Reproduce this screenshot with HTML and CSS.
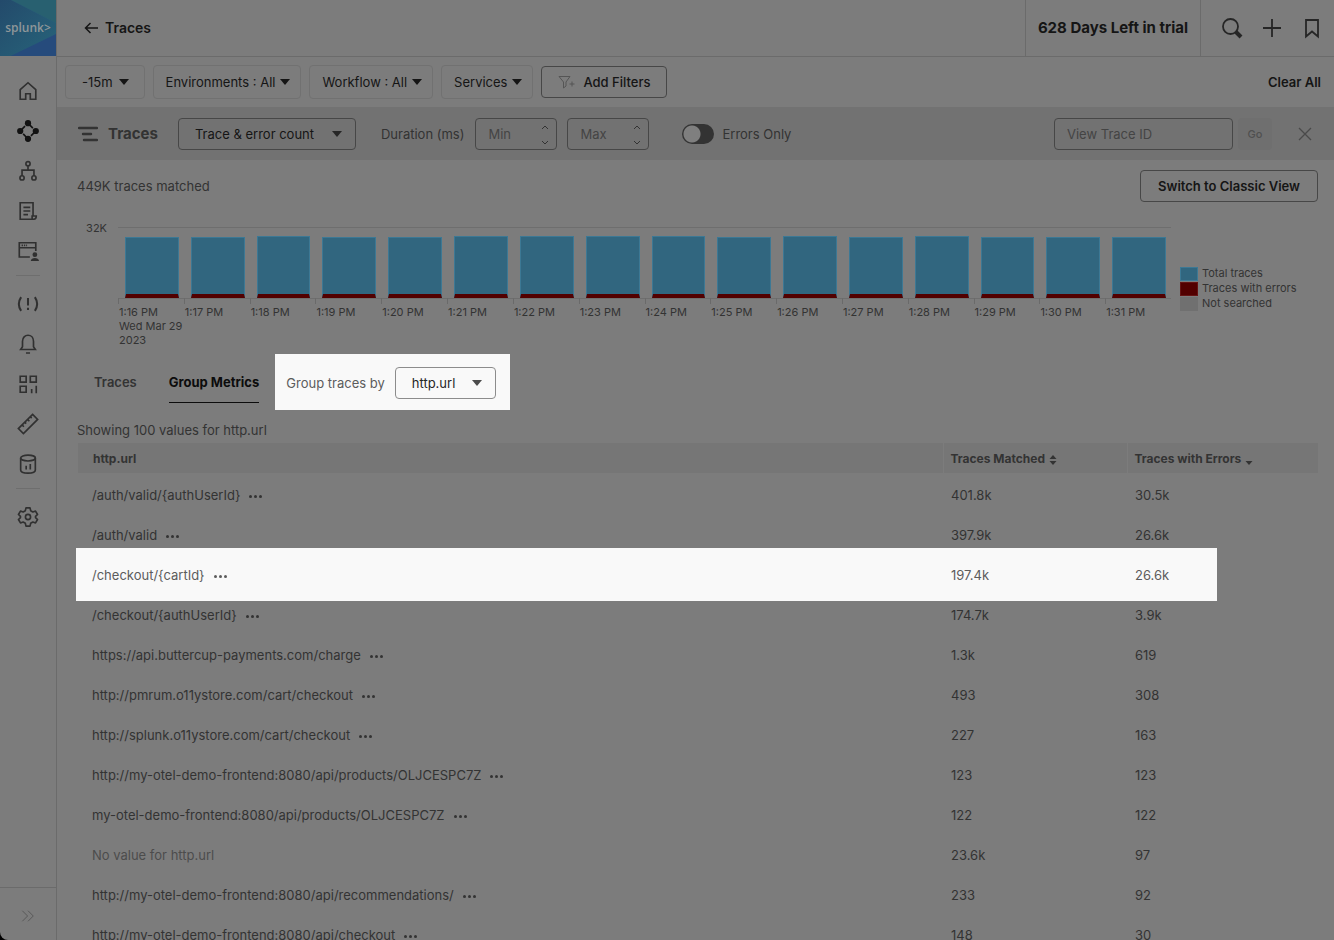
FILE: index.html
```html
<!DOCTYPE html>
<html lang="en">
<head>
<meta charset="utf-8">
<meta name="viewport" content="width=device-width, initial-scale=1">
<title>Traces</title>
<link rel="stylesheet" href="styles.css">
</head>
<body>
<div class="app">
  <aside class="sidebar">
    <a class="logo" href="#" aria-label="splunk home">
      <svg class="logo-art" viewBox="0 0 56 56" preserveAspectRatio="none" aria-hidden="true">
        <defs>
          <linearGradient id="g1" x1="0" y1="0" x2="1" y2="1"><stop offset="0" stop-color="#234a6b"/><stop offset="1" stop-color="#27647a"/></linearGradient>
          <linearGradient id="g2" x1="0" y1="1" x2="1" y2="0"><stop offset="0" stop-color="#244f78"/><stop offset="1" stop-color="#2b6a80"/></linearGradient>
        </defs>
        <rect width="56" height="56" fill="url(#g2)"/>
        <path d="M11 0H56V23Z" fill="#286070"/>
        <path d="M0 0H11L56 23V34L11 56H0Z" fill="url(#g1)"/>
        <path d="M11 56L56 34V56Z" fill="#264b7c"/>
      </svg>
      <span class="logo-text">splunk&gt;</span>
    </a>
    <nav class="nav" aria-label="Main">
      <a href="#" aria-label="Home"><svg viewBox="0 0 24 24"><path d="M3.500 10.500L12 3L20.500 10.500V21H14.500V15H9.500V21H3.500Z"/></svg></a>
      <a href="#" aria-label="APM" class="active"><svg viewBox="0 0 24 24"><path d="M12 3.500L20.500 12L12 20.500L3.500 12Z" stroke-dasharray="7.500 2 2.500 0"/><g fill="currentColor" stroke="none"><circle cx="12" cy="3.500" r="3.400"/><circle cx="20.500" cy="12" r="3.400"/><circle cx="12" cy="20.500" r="3.400"/><circle cx="3.500" cy="12" r="3.400"/></g></svg></a>
      <a href="#" aria-label="Infrastructure"><svg viewBox="0 0 24 24"><circle cx="12" cy="4" r="2.300"/><circle cx="5.500" cy="19.500" r="2.300"/><circle cx="18.500" cy="19.500" r="2.300"/><path d="M12 6.300V11M5.500 17.200V11H18.500V17.200"/></svg></a>
      <a href="#" aria-label="Log Observer"><svg viewBox="0 0 24 24"><path d="M17.500 16.500V3H3.500V21H18.500C20.500 21 21 19.500 21 17.500H16.500V19.500C16.500 20.500 17.500 21 18.500 21M7 8H14.500M7 12H14.500M7 16H12"/></svg></a>
      <a href="#" aria-label="RUM"><svg viewBox="0 0 24 24"><path d="M14 18.500H2.500V3H20.500V12M2.500 8.500H20.500"/><path d="M5 5.800H11" stroke-dasharray="1.500 1"/><g fill="currentColor" stroke="none"><circle cx="19.500" cy="16" r="2.600"/><path d="M15 23C15 18.500 24 18.500 24 23Z"/></g></svg></a>
      <hr>
      <a href="#" aria-label="Incidents"><svg viewBox="0 0 24 24"><path d="M4.500 4.500Q-.5 12 4.500 19.500M19.500 4.500Q24.500 12 19.500 19.500M12 5.500V13.500M12 16V18.500" stroke-width="2.200"/></svg></a>
      <a href="#" aria-label="Alerts"><svg viewBox="0 0 24 24"><path d="M4 18L6 15V9C6 5 8.800 2.500 12 2.500S18 5 18 9V15L20 18ZM9.800 21.800H14.200"/></svg></a>
      <a href="#" aria-label="Dashboards"><svg viewBox="0 0 24 24"><path d="M3.500 3.500H10V10H3.500ZM14.500 3.500H21V10H14.500ZM3.500 14.500H10V21H3.500ZM16 17.500V22M21 14V22"/></svg></a>
      <a href="#" aria-label="Metrics"><svg viewBox="0 0 24 24"><path d="M17 1.500L22.500 7L7 22.500L1.500 17ZM5.500 13L7.500 15M8.500 10L10 11.500M11.500 7L13.500 9M14.500 4L16 5.500"/></svg></a>
      <a href="#" aria-label="Data Management"><svg viewBox="0 0 24 24"><ellipse cx="12" cy="5.500" rx="8" ry="3.200"/><path d="M4 5.500V18.500C4 23 20 23 20 18.500V5.500M10 14V18M14.500 12V18"/></svg></a>
      <hr>
      <a href="#" aria-label="Settings"><svg viewBox="0 0 24 24"><path d="M9.800 2H14.200L14.900 5.100L17.300 6.500L20.200 5.500L22.400 9.300L20.200 11.400V12.600L22.400 14.700L20.200 18.500L17.300 17.500L14.900 18.900L14.200 22H9.800L9.100 18.900L6.700 17.500L3.800 18.500L1.600 14.700L3.800 12.600V11.400L1.600 9.300L3.800 5.500L6.700 6.500L9.100 5.100Z" stroke-linejoin="round"/><circle cx="12" cy="12" r="2.800"/></svg></a>
    </nav>
    <button class="expand" type="button" aria-label="Expand navigation"><svg viewBox="0 0 16 16"><path d="M1.500 2L7.500 8L1.500 14M8 2L14 8L8 14"/></svg></button>
  </aside>

  <main class="main">
    <header class="topbar">
      <a class="back" href="#"><svg viewBox="0 0 14 14" aria-hidden="true"><path d="M14 7H1.500M6.500 2L1.500 7L6.500 12"/></svg>Traces</a>
      <div class="trial">628 Days Left in trial</div>
      <div class="top-actions">
        <button type="button" aria-label="Search"><svg viewBox="0 0 24 24"><circle cx="10.500" cy="10.500" r="7.500"/><path d="M16 16L21 21" stroke-width="4"/></svg></button>
        <button type="button" aria-label="Create"><svg viewBox="0 0 24 24"><path d="M12 3V21M3 12H21"/></svg></button>
        <button type="button" aria-label="Bookmark"><svg viewBox="0 0 24 24"><path d="M6 4H18V20.500L12 15.500L6 20.500Z"/></svg></button>
      </div>
    </header>

    <div class="filters">
      <button class="chip chip-time" type="button">-15m <svg class="caret" viewBox="0 0 10 6"><path d="M0 0H10L5 6Z"/></svg></button>
      <button class="chip" type="button">Environments : All <svg class="caret" viewBox="0 0 10 6"><path d="M0 0H10L5 6Z"/></svg></button>
      <button class="chip" type="button">Workflow : All <svg class="caret" viewBox="0 0 10 6"><path d="M0 0H10L5 6Z"/></svg></button>
      <button class="chip" type="button">Services <svg class="caret" viewBox="0 0 10 6"><path d="M0 0H10L5 6Z"/></svg></button>
      <button class="outlined add" type="button"><svg viewBox="0 0 18 14" aria-hidden="true"><path d="M1 1.500H12L8 7V11L5.500 13V7ZM11.500 9H16.500M14 6.500V11.500"/></svg>Add Filters</button>
      <button class="clear" type="button">Clear All</button>
    </div>

    <div class="toolbar">
      <svg class="traces-icon" viewBox="0 0 20 16" aria-hidden="true"><path d="M1 2H19M5 8H13M6 14H19"/></svg>
      <h1>Traces</h1>
      <span class="select select-wide"><select aria-label="Chart type"><option>Trace &amp; error count</option></select><svg class="caret" viewBox="0 0 10 6"><path d="M0 0H10L5 6Z"/></svg></span>
      <label class="duration" for="min">Duration (ms)</label>
      <span class="num"><input id="min" type="number" placeholder="Min"><svg viewBox="0 0 8 20"><path d="M1 4L4 1L7 4M1 16L4 19L7 16"/></svg></span>
      <span class="num"><input type="number" aria-label="Maximum duration" placeholder="Max"><svg viewBox="0 0 8 20"><path d="M1 4L4 1L7 4M1 16L4 19L7 16"/></svg></span>
      <label class="switch"><input type="checkbox" role="switch">Errors Only</label>
      <input class="trace-id" type="text" aria-label="View Trace ID" placeholder="View Trace ID">
      <button class="go" type="button" disabled>Go</button>
      <button class="close" type="button" aria-label="Close"><svg viewBox="0 0 14 14"><path d="M1 1L13 13M13 1L1 13"/></svg></button>
    </div>

    <section class="content">
      <div class="summary">
        <span>449K traces matched</span>
        <button class="outlined strong" type="button">Switch to Classic View</button>
      </div>

      <div class="chart">
        <div class="y-label">32K</div>
        <div class="plot">
          <div class="col"><div class="bar"></div><span>1:16 PM<br>Wed Mar 29<br>2023</span></div>
          <div class="col"><div class="bar"></div><span>1:17 PM</span></div>
          <div class="col"><div class="bar tall"></div><span>1:18 PM</span></div>
          <div class="col"><div class="bar"></div><span>1:19 PM</span></div>
          <div class="col"><div class="bar"></div><span>1:20 PM</span></div>
          <div class="col"><div class="bar tall"></div><span>1:21 PM</span></div>
          <div class="col"><div class="bar tall"></div><span>1:22 PM</span></div>
          <div class="col"><div class="bar tall"></div><span>1:23 PM</span></div>
          <div class="col"><div class="bar tall"></div><span>1:24 PM</span></div>
          <div class="col"><div class="bar"></div><span>1:25 PM</span></div>
          <div class="col"><div class="bar tall"></div><span>1:26 PM</span></div>
          <div class="col"><div class="bar"></div><span>1:27 PM</span></div>
          <div class="col"><div class="bar tall"></div><span>1:28 PM</span></div>
          <div class="col"><div class="bar"></div><span>1:29 PM</span></div>
          <div class="col"><div class="bar"></div><span>1:30 PM</span></div>
          <div class="col"><div class="bar"></div><span>1:31 PM</span></div>
        </div>
        <ul class="legend">
          <li class="total">Total traces</li>
          <li class="errors">Traces with errors</li>
          <li class="none">Not searched</li>
        </ul>
      </div>

      <div class="tabs">
        <button class="tab" type="button">Traces</button>
        <button class="tab selected" type="button">Group Metrics</button>
        <div class="group-by">
          <label for="group">Group traces by</label>
          <span class="select"><select id="group"><option>http.url</option></select><svg class="caret" viewBox="0 0 10 6"><path d="M0 0H10L5 6Z"/></svg></span>
        </div>
      </div>

      <p class="showing">Showing 100 values for http.url</p>

      <table class="metrics">
        <thead>
          <tr>
            <th class="c-url">http.url</th>
            <th class="c-matched">Traces Matched <svg class="sort" viewBox="0 0 8 10"><path d="M4 0L7.500 4H.5ZM.5 6H7.500L4 10Z"/></svg></th>
            <th class="c-errors">Traces with Errors <svg class="sort" viewBox="0 0 8 10"><path d="M.5 6H7.500L4 10Z"/></svg></th>
          </tr>
        </thead>
        <tbody>
          <tr><td>/auth/valid/{authUserId}<button class="more" type="button" aria-label="More"><i></i><i></i><i></i></button></td><td>401.8k</td><td>30.5k</td></tr>
          <tr><td>/auth/valid<button class="more" type="button" aria-label="More"><i></i><i></i><i></i></button></td><td>397.9k</td><td>26.6k</td></tr>
          <tr class="spotlight"><td>/checkout/{cartId}<button class="more" type="button" aria-label="More"><i></i><i></i><i></i></button></td><td>197.4k</td><td>26.6k</td></tr>
          <tr><td>/checkout/{authUserId}<button class="more" type="button" aria-label="More"><i></i><i></i><i></i></button></td><td>174.7k</td><td>3.9k</td></tr>
          <tr><td>https://api.buttercup-payments.com/charge<button class="more" type="button" aria-label="More"><i></i><i></i><i></i></button></td><td>1.3k</td><td>619</td></tr>
          <tr><td>http://pmrum.o11ystore.com/cart/checkout<button class="more" type="button" aria-label="More"><i></i><i></i><i></i></button></td><td>493</td><td>308</td></tr>
          <tr><td>http://splunk.o11ystore.com/cart/checkout<button class="more" type="button" aria-label="More"><i></i><i></i><i></i></button></td><td>227</td><td>163</td></tr>
          <tr><td>http://my-otel-demo-frontend:8080/api/products/OLJCESPC7Z<button class="more" type="button" aria-label="More"><i></i><i></i><i></i></button></td><td>123</td><td>123</td></tr>
          <tr><td>my-otel-demo-frontend:8080/api/products/OLJCESPC7Z<button class="more" type="button" aria-label="More"><i></i><i></i><i></i></button></td><td>122</td><td>122</td></tr>
          <tr><td class="empty">No value for http.url</td><td>23.6k</td><td>97</td></tr>
          <tr><td>http://my-otel-demo-frontend:8080/api/recommendations/<button class="more" type="button" aria-label="More"><i></i><i></i><i></i></button></td><td>233</td><td>92</td></tr>
          <tr><td>http://my-otel-demo-frontend:8080/api/checkout<button class="more" type="button" aria-label="More"><i></i><i></i><i></i></button></td><td>148</td><td>30</td></tr>
        </tbody>
      </table>
    </section>
  </main>
</div>
</body>
</html>
```
FILE: styles.css
```css
:root {
  --bg: #7c7c7c;
  --bar: #727272;
  --line: #6b6b6b;
  --outline: #474747;
  --text: #151515;
  --muted: #333333;
  --light: #f9f9f9;
}
*, *::before, *::after { box-sizing: border-box; }
html { background: #000; }
body {
  margin: 0;
  font-family: Inter, "Liberation Sans", sans-serif;
  font-size: 13px;
  line-height: 20px;
  color: var(--muted);
}
button, input, select { font: inherit; color: inherit; margin: 0; }
button { background: none; border: 0; padding: 0; cursor: pointer; white-space: nowrap; }
a { color: inherit; text-decoration: none; }
svg { display: block; fill: none; stroke: currentColor; flex: none; }

.app { display: flex; height: 100vh; overflow: hidden; background: var(--bg); border-bottom-left-radius: 8px; }

/* Sidebar */
.sidebar { flex: none; width: 57px; display: flex; flex-direction: column; border-right: 1px solid var(--line); }
.logo { position: relative; height: 56px; display: flex; align-items: center; justify-content: center; }
.logo-art { position: absolute; inset: 0; width: 100%; height: 100%; stroke: none; }
.logo-text { position: relative; font-family: "Open Sans", sans-serif; font-size: 12px; font-weight: 600; color: #8e9699; }
.nav { flex: 1; padding-top: 15px; display: flex; flex-direction: column; align-items: center; color: #303030; }
.nav a { height: 40px; display: flex; align-items: center; }
.nav svg { width: 22px; height: 22px; stroke-width: 1.8; }
.nav .active { color: #121212; }
.nav hr { width: 24px; height: 1px; margin: 4px 0 8px; border: 0; background: #6e6e6e; }
.expand { height: 53px; display: flex; align-items: center; justify-content: center; border-top: 1px solid var(--line); color: #555; padding-top: 4px; }
.expand svg { width: 16px; height: 14px; }

/* Header */
.main { flex: 1; min-width: 0; display: flex; flex-direction: column; }
.topbar { flex: none; height: 57px; display: flex; align-items: center; border-bottom: 1px solid var(--line); color: var(--text); padding-left: 27px; }
.back { flex: 1; display: flex; align-items: center; gap: 7px; font-size: 14px; font-weight: 600; }
.back svg { width: 14px; height: 14px; stroke-width: 1.5; }
.trial { align-self: stretch; display: flex; align-items: center; padding: 0 12px; border: solid var(--line); border-width: 0 1px; font-size: 15px; font-weight: 700; }
.top-actions { display: flex; gap: 16px; padding: 0 10px 0 19px; color: #262626; }
.top-actions svg { width: 24px; height: 24px; stroke-width: 1.8; }

/* Filter bar */
.filters { flex: none; height: 50px; display: flex; align-items: center; gap: 8px; padding: 0 13px 0 8px; color: var(--text); }
.chip { height: 34px; display: flex; align-items: center; gap: 5px; padding: 0 10px 0 12px; border: 1px solid #717171; border-radius: 4px; }
.chip-time { padding: 0 15px 0 16px; gap: 6px; }
.caret { width: 10px; height: 6px; fill: currentColor; stroke: none; }
.outlined { height: 32px; padding: 0 16px; border: 1px solid var(--outline); border-radius: 4px; color: var(--text); }
.add { display: flex; align-items: center; gap: 7px; font-weight: 500; }
.add svg { width: 18px; height: 14px; color: #555; }
.clear { margin-left: auto; font-weight: 600; }

/* Trace toolbar */
.toolbar { flex: none; height: 53px; display: flex; align-items: center; padding: 0 20px 0 21px; background: var(--bar); }
.traces-icon { width: 20px; height: 16px; stroke-width: 2.4; stroke-linecap: round; }
.toolbar h1 { margin: 0 20px 0 10px; font-size: 15px; line-height: 20px; font-weight: 700; }
.select { position: relative; display: inline-flex; color: var(--text); }
.select select { width: 101px; height: 32px; padding: 0 30px 0 16px; appearance: none; background: none; border: 1px solid var(--outline); border-radius: 4px; }
.select-wide select { width: 178px; }
.select .caret { position: absolute; right: 14px; top: 13px; pointer-events: none; color: #262626; }
.duration { margin: 0 11px 0 25px; }
.num { position: relative; display: inline-flex; margin-right: 10px; }
.num input { width: 82px; height: 32px; padding: 0 26px 0 12px; appearance: textfield; background: none; border: 1px solid var(--outline); border-radius: 4px; }
.num input::-webkit-inner-spin-button { display: none; }
.num svg { position: absolute; right: 8px; top: 7px; width: 8px; height: 20px; }
input::placeholder { color: #444; opacity: 1; }
.switch { display: flex; align-items: center; gap: 8px; margin-left: 23px; }
.switch input { appearance: none; width: 32px; height: 20px; margin: 0; border-radius: 10px; background: radial-gradient(circle at 10px 10px, #7f7f7f 8px, #333 9px); }
.trace-id { width: 179px; height: 32px; margin-left: auto; padding: 0 12px; background: none; border: 1px solid var(--outline); border-radius: 4px; }
.go { width: 34px; height: 32px; margin-left: 5px; border-radius: 4px; background: #6f6f6f; color: #505050; font-size: 11px; font-weight: 500; }
.close { margin-left: 26px; margin-right: 2px; color: #4a4a4a; }
.close svg { width: 14px; height: 14px; stroke-width: 1.3; }

/* Content */
.content { flex: 1; min-height: 0; overflow: hidden; padding: 10px 16px 0 20px; }
.summary { display: flex; align-items: center; justify-content: space-between; }
.strong { padding: 0 17px; font-weight: 600; }

/* Chart */
.chart { display: grid; grid-template-columns: 41px 1fr 147px; margin-top: 18px; min-height: 134px; font-size: 11px; line-height: 14px; }
.y-label { padding: 1px 11px 0 0; text-align: right; }
.plot { display: flex; align-items: flex-start; margin-top: 7px; border-top: 1px solid #6e6e6e; }
.col { flex: 1 1 0; min-width: 0; position: relative; height: 71px; padding: 0 5px 0 7px; border-bottom: 1px solid #6e6e6e; display: flex; align-items: flex-end; }
.col::after { content: ""; position: absolute; left: 0; top: 70px; width: 1px; height: 6px; background: #6a6a6a; }
.col span { position: absolute; left: 1px; top: 77px; white-space: nowrap; }
.bar { width: 100%; height: 61px; background: #31667f; border: 1px solid #3c7894; border-bottom: 4px solid #520000; }
.bar.tall { height: 62px; }
.legend { list-style: none; margin: 46px 0 0; padding: 0 0 0 9px; line-height: 15px; }
.legend li { display: flex; align-items: center; gap: 4px; white-space: nowrap; }
.legend li::before { content: ""; flex: none; width: 18px; height: 14px; }
.legend .total::before { background: #31667f; border: 1px solid #3c7894; }
.legend .errors::before { background: #520000; border: 1px solid #661414; }
.legend .none::before { background: #707070; }

/* Tabs */
.tabs { display: flex; align-items: center; padding-left: 17px; }
.tab { height: 42px; margin-right: 32px; border-bottom: 1px solid transparent; font-weight: 600; }
.tab.selected { margin-right: 16px; border-color: #0c0c0c; color: #0c0c0c; font-weight: 700; }
.group-by { height: 56px; display: flex; align-items: center; gap: 10px; padding: 2px 14px 0 11px; background: var(--light); color: #5c5c5c; }
.group-by select { border-color: #8c8c8c; color: #262626; }
.group-by .caret { color: #4c4c4c; }
.showing { margin: 10px 0 3px; }

/* Table */
.metrics { width: calc(100% - 1px); margin-left: 1px; border-collapse: collapse; table-layout: fixed; position: relative; isolation: isolate; }
.metrics th { height: 30px; padding: 2px 0 0 15px; text-align: left; font-size: 12px; font-weight: 700; background: #767676; }
.metrics th + th { border-left: 1px solid #7c7c7c; padding-left: 7px; }
.metrics td { height: 40px; padding: 3px 0 0 14px; }
.metrics td + td { padding-left: 8px; }
.c-matched { width: 184px; }
.c-errors { width: 191px; }
.sort { display: inline-block; width: 8px; height: 10px; margin-left: 1px; vertical-align: -2px; fill: currentColor; stroke: none; }
.more { display: inline-flex; gap: 2px; margin-left: 9px; vertical-align: 2px; }
.more i { width: 3px; height: 3px; border-radius: 50%; background: currentColor; }
.metrics .empty { color: #4c4c4c; }
.spotlight { position: relative; color: #5c5c5c; }
.spotlight td:first-child::before { content: ""; position: absolute; z-index: -1; inset: -5px 101px -8px -2px; background: var(--light); }
```
